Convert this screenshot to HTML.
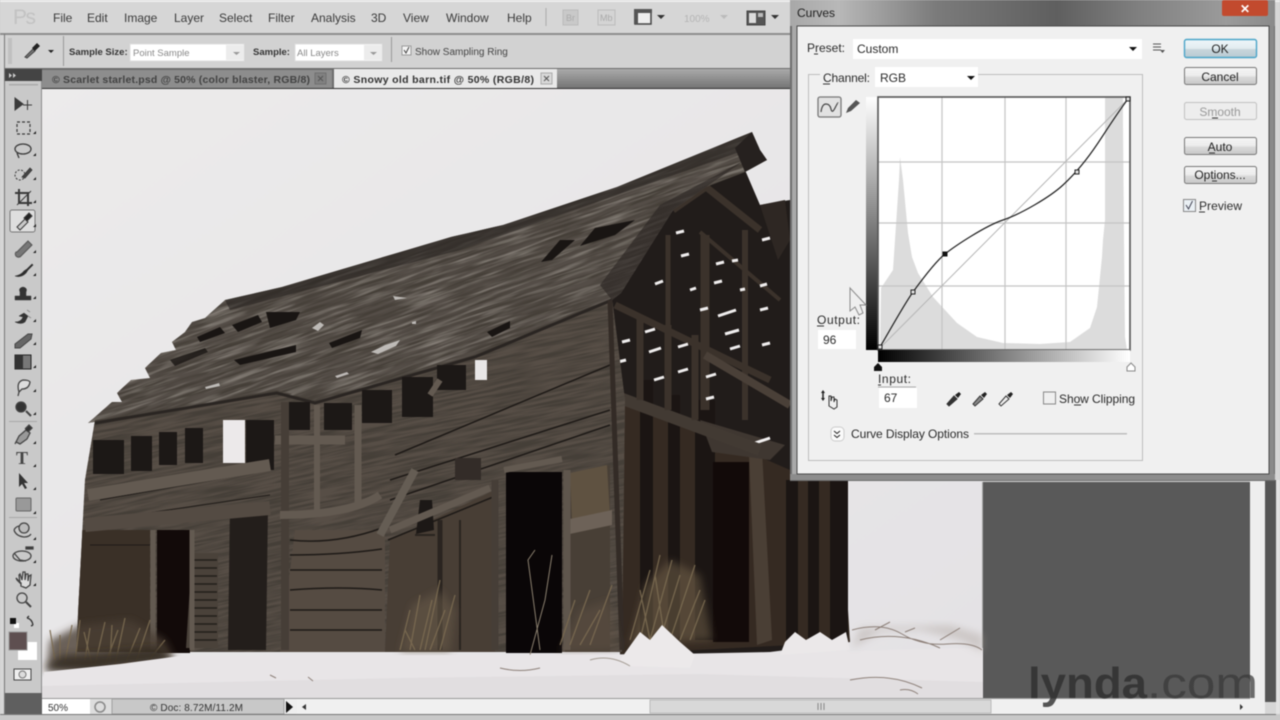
<!DOCTYPE html>
<html><head><meta charset="utf-8"><title>Curves</title>
<style>
html,body{margin:0;padding:0;background:#ccc;width:1280px;height:720px;overflow:hidden}
#w{position:relative;width:1280px;height:720px;overflow:hidden}
svg{display:block;position:absolute;left:0;top:0;filter:blur(.4px)}
text{font-family:"Liberation Sans",sans-serif;fill:#333;font-size:12px}
.m{font-size:12px;fill:#3a3a3a}
.o{font-size:9.5px;font-weight:bold;fill:#333}
.f{font-size:9.5px;fill:#888}
.d{font-size:12px;fill:#2a2a2a}
.b{font-size:12px;fill:#222;text-anchor:middle}
</style></head><body><div id="w">
<svg width="1280" height="720" viewBox="0 0 1280 720" xmlns="http://www.w3.org/2000/svg">
<defs>
<linearGradient id="btn" x1="0" y1="0" x2="0" y2="1"><stop offset="0" stop-color="#f5f5f5"/><stop offset=".5" stop-color="#ececec"/><stop offset=".55" stop-color="#dadada"/><stop offset="1" stop-color="#c8c8c8"/></linearGradient>
<linearGradient id="okb" x1="0" y1="0" x2="0" y2="1"><stop offset="0" stop-color="#eef6fa"/><stop offset=".5" stop-color="#e2ecf0"/><stop offset=".55" stop-color="#c9d6dc"/><stop offset="1" stop-color="#b9cad2"/></linearGradient>
<linearGradient id="vb" x1="0" y1="0" x2="0" y2="1"><stop offset="0" stop-color="#fff"/><stop offset="1" stop-color="#000"/></linearGradient>
<linearGradient id="hb" x1="0" y1="0" x2="1" y2="0"><stop offset="0" stop-color="#000"/><stop offset="1" stop-color="#fff"/></linearGradient>
<linearGradient id="title" x1="0" y1="0" x2="1" y2="0"><stop offset="0" stop-color="#a8a8a8"/><stop offset=".1" stop-color="#b8b8b8"/><stop offset=".3" stop-color="#7b7b7b"/><stop offset=".55" stop-color="#5f5f5f"/><stop offset=".72" stop-color="#808080"/><stop offset=".9" stop-color="#9b9b9b"/><stop offset="1" stop-color="#8a8a8a"/></linearGradient>
<linearGradient id="tabr" x1="0" y1="0" x2="0" y2="1"><stop offset="0" stop-color="#aaa"/><stop offset="1" stop-color="#757575"/></linearGradient>
<linearGradient id="sky" x1="0" y1="0" x2="1" y2="1"><stop offset="0" stop-color="#ecebeb"/><stop offset="1" stop-color="#e4e2e5"/></linearGradient>
<filter id="grain" x="0" y="0" width="100%" height="100%"><feTurbulence type="fractalNoise" baseFrequency=".02 .38" numOctaves="3" seed="4"/><feColorMatrix values="0 0 0 0 .06  0 0 0 0 .05  0 0 0 0 .04  3 0 0 0 -1.05"/></filter>
<filter id="grainL" x="0" y="0" width="100%" height="100%"><feTurbulence type="fractalNoise" baseFrequency=".02 .3" numOctaves="3" seed="11"/><feColorMatrix values="0 0 0 0 .7  0 0 0 0 .66  0 0 0 0 .6  2.4 0 0 0 -1.1"/></filter>
<filter id="soft" x="-20%" y="-20%" width="140%" height="140%"><feGaussianBlur stdDeviation="4"/></filter>
<clipPath id="roofc"><path d="M225 300 282 287 451 237 503 225 617 187 752 132 760 150 767 160 745 172 706 187 673 210 621 293 612 300 475 357 315 403 277 393 88 423 112 402 122 402 117 393 131 380 150 378 145 368 161 353 176 350 172 342 185 332 192 322 205 318Z"/></clipPath>
<clipPath id="wallc"><path d="M95 420 277 390 315 400 475 352 612 298 625 400 622 652 76 652 85 480Z"/></clipPath>
</defs>

<!-- app chrome -->
<rect width="1280" height="720" fill="#d6d6d6"/>
<rect x="0" y="0" width="1280" height="2" fill="#eee"/>
<rect x="0" y="33" width="800" height="2" fill="#8e8e8e"/>
<rect x="5" y="35" width="790" height="34" fill="#d2d2d2"/>
<rect x="4" y="34" width="1" height="686" fill="#777"/>
<text x="13" y="24" style="font-size:21px;fill:#c2c2c2" textLength="23">Ps</text>
<g>
<text class="m" x="53" y="22">File</text><text class="m" x="87" y="22">Edit</text><text class="m" x="124" y="22">Image</text><text class="m" x="174" y="22">Layer</text><text class="m" x="219" y="22">Select</text><text class="m" x="268" y="22">Filter</text><text class="m" x="311" y="22">Analysis</text><text class="m" x="371" y="22">3D</text><text class="m" x="403" y="22">View</text><text class="m" x="446" y="22">Window</text><text class="m" x="507" y="22">Help</text>
</g>
<rect x="545.5" y="8" width="1" height="18" fill="#aaa"/>
<rect x="563" y="10" width="15" height="15" fill="#c9c9c9" stroke="#bbb"/><text x="566" y="21" style="font-size:9px;fill:#aaa">Br</text>
<rect x="598" y="10" width="17" height="15" fill="#d4d4d4" stroke="#bbb"/><text x="600" y="21" style="font-size:9px;fill:#aaa">Mb</text>
<rect x="635" y="11" width="16" height="13" fill="#eee" stroke="#444" stroke-width="1.5"/><rect x="634" y="9" width="18" height="4" fill="#555"/><rect x="634" y="9" width="4" height="15" fill="#555"/>
<path d="M657 15h8l-4 4z" fill="#333"/>
<text x="684" y="22" style="font-size:10px;fill:#b5b5b5">100%</text><path d="M720 15h8l-4 4z" fill="#bbb"/>
<rect x="747" y="11" width="18" height="14" fill="#555" stroke="#444"/><rect x="749" y="13" width="7" height="10" fill="#ddd"/><rect x="758" y="13" width="5" height="4" fill="#bbb"/>
<path d="M771 15h8l-4 4z" fill="#333"/>

<!-- options bar -->
<rect x="8" y="38" width="4" height="26" fill="#bbb" opacity=".8"/>
<g transform="translate(24,42)"><path d="M1 15 9 7l2 2-8 7z" fill="#777" stroke="#444" stroke-width="1"/><path d="M8 6l5-5 3 3-5 5z" fill="#222"/></g>
<path d="M48 50h6l-3 3z" fill="#222"/>
<rect x="63" y="36" width="1" height="30" fill="#999"/>
<text class="o" x="69" y="55">Sample Size:</text>
<rect x="130" y="44" width="114" height="17" fill="#fff" stroke="#ddd"/><rect x="226" y="45" width="18" height="15" fill="#ececec"/>
<text class="f" x="133" y="56">Point Sample</text><path d="M233 52h7l-3.500 3z" fill="#999"/>
<text class="o" x="253" y="55">Sample:</text>
<rect x="295" y="44" width="87" height="17" fill="#fff" stroke="#ddd"/><rect x="364" y="45" width="18" height="15" fill="#ececec"/>
<text class="f" x="297" y="56">All Layers</text><path d="M370 52h7l-3.500 3z" fill="#999"/>
<rect x="391" y="37" width="1" height="25" fill="#999"/>
<rect x="402" y="46" width="9" height="9" fill="#f4f4f4" stroke="#999"/><path d="M404 50l2 3 3-6" fill="none" stroke="#444"/>
<text x="415" y="55" style="font-size:10px;fill:#444">Show Sampling Ring</text>

<!-- tab bar -->
<rect x="5" y="68" width="790" height="21" fill="#6d6d6d"/>
<rect x="557" y="69" width="240" height="19" fill="url(#tabr)"/>
<rect x="42" y="70" width="290" height="18" fill="#8d8d8d"/>
<text x="52" y="83" style="font-size:10.500px;font-weight:bold;fill:#424242" textLength="258">© Scarlet starlet.psd @ 50% (color blaster, RGB/8)</text>
<rect x="315" y="73" width="11" height="11" fill="#808080" stroke="#707070"/><path d="M318 76l5 5m0-5-5 5" stroke="#555"/>
<rect x="334" y="69" width="223" height="19" fill="#e9e9e9"/>
<text x="342" y="83" style="font-size:10.500px;font-weight:bold;fill:#333" textLength="192">© Snowy old barn.tif @ 50% (RGB/8)</text>
<rect x="541" y="73" width="11" height="11" fill="#d8d8d8" stroke="#aaa"/><path d="M544 76l5 5m0-5-5 5" stroke="#555"/>
<rect x="5" y="69" width="37" height="12" fill="#444"/>
<path d="M9 73l3 2.500-3 2.500zM13 73l3 2.500-3 2.500z" fill="#ccc"/>
<rect x="42" y="88" width="760" height="1" fill="#333"/>

<!-- canvas -->
<rect x="42" y="89" width="941" height="610" fill="url(#sky)"/>
<rect x="983" y="482" width="267" height="216" fill="#595959"/>
<rect x="1250" y="480" width="15" height="234" fill="#eee"/>
<rect x="1265" y="480" width="11" height="222" fill="#555"/>
<rect x="1276" y="480" width="4" height="240" fill="#e2e2e2"/>
<rect x="982" y="482" width="1" height="216" fill="#a8a8a8"/>

<!-- barn -->
<g>
<path d="M612 300 673 210 706 187 722 172 745 170 760 205 790 200 800 480 832 480 850 642 770 652 620 655 612 400Z" fill="#211c1a"/>
<path d="M618 395 790 470 840 480 850 642 620 654Z" fill="#352a22"/>
<g fill="#1b1513"><rect x="640" y="380" width="13" height="260"/><rect x="668" y="395" width="12" height="245"/><rect x="695" y="400" width="20" height="240"/><rect x="786" y="480" width="12" height="160"/><rect x="808" y="480" width="11" height="160"/><rect x="830" y="480" width="18" height="160"/></g>
<path d="M713 462h36v180h-36z" fill="#120a09"/>
<path d="M749 455 762 450 772 640 757 645Z" fill="#4a3f35"/>
<path d="M700 420 768 440 785 445 770 460 712 452Z" fill="#3f3731"/>
<path d="M704 428 752 444 770 438" stroke="#f2f0f0" stroke-width="3" fill="none"/>
<g stroke="#3b322b" fill="none">
<path d="M615 305 770 380" stroke-width="7"/>
<path d="M612 395 760 450" stroke-width="12" stroke="#423a33"/>
<path d="M668 235V400" stroke-width="5"/><path d="M705 235V410" stroke-width="9"/><path d="M745 230V420" stroke-width="6"/>
<path d="M640 315V400M668 325V410M695 335V420" stroke-width="7"/>
<path d="M673 210 706 187 760 230" stroke-width="7"/><path d="M700 232 780 300" stroke-width="4"/>
<path d="M705 355 790 405" stroke-width="8" stroke="#4a4038"/>
</g>
<g stroke="#efeded" stroke-width="3" fill="none">
<path d="M676 233l8-2M681 256l8-2M655 284l8-3M716 264l8-2M714 283l8-2M732 261l6-1M718 316l18-6M725 334l14-4M649 352l12-4M678 347l10-3M622 342l8-2M645 332l10-3M618 362l8-2M730 349l10-3M706 377l10-3M654 380l10-3M678 372l10-3M614 380l7-2M706 399l8-2M762 345l8-2M760 286l7-2M762 240l8-2M700 310l8-2M760 310l8-2M740 290l5-1M690 290l6-2"/>
</g>
<path d="M760 205 785 200 790 240 778 260Z" fill="#2e2723"/>
<!-- front wall -->
<path d="M95 420 277 390 315 400 475 352 612 298 625 400 622 652 76 652 85 480Z" fill="#574e46"/>
<!-- roof -->
<path d="M225 300 282 287 451 237 503 225 617 187 752 132 760 150 767 160 745 172 706 187 673 210 621 293 612 300 475 357 315 403 277 393 88 423 112 402 122 402 117 393 131 380 150 378 145 368 161 353 176 350 172 342 185 332 192 322 205 318Z" fill="#544d47"/>
<g clip-path="url(#roofc)">
<g transform="rotate(-19 400 300)"><rect x="-20" y="60" width="900" height="500" filter="url(#grain)"/><rect x="-20" y="60" width="900" height="500" filter="url(#grainL)" opacity=".4"/></g>
<path d="M225 300 451 237 752 132 745 150 460 250 230 310Z" fill="#2b2724" opacity=".65"/>
<path d="M706 187 673 210 621 293 612 300 600 285 660 205 745 160Z" fill="#2f2a27" opacity=".7"/>
<path d="M745 172 767 160 752 132 735 148Z" fill="#26211f"/>
</g>
<g fill="#191513">
<path d="M197 337 220 327 225 333 200 342ZM232 325 258 315 262 322 238 332ZM266 312 300 312 296 320 270 328Z"/>
<path d="M234 360 296 345 296 352 240 365Z"/>
<path d="M329 343 362 330 360 338 332 348Z"/>
<path d="M487 332 510 321 510 328 492 337Z"/>
<path d="M541 262 560 240 575 240 552 260ZM580 246 595 228 635 220 615 235Z"/>
<path d="M170 360 205 348 208 352 175 366Z" opacity=".8"/>
</g>
<g fill="#c9c6c3" opacity=".9">
<path d="M371 352 385 345 400 340 396 346 378 354Z"/><path d="M312 328l8-6 4 3-6 6z"/><path d="M335 376l12-4 2 2-12 4z"/><path d="M205 387l14-4 1 3-14 3z"/><path d="M412 322l4-1v3h-4z"/>
<path d="M393 296l14 2-12 2z"/>
</g>
<g clip-path="url(#wallc)">
<g transform="rotate(-12 350 480)"><rect x="0" y="260" width="720" height="460" filter="url(#grain)"/></g>
<path d="M78 530H150V652H78Z" fill="#3a3027"/>
<path d="M295 530H385V652H280Z" fill="#554b42" />
<path d="M390 540 495 490V652H385Z" fill="#483e35"/>
<path d="M565 475 610 465V652H565Z" fill="#483f36"/>
<path d="M570 473 607 465 610 515 572 522Z" fill="#5f5241"/>
<path d="M565 520 612 510 612 525 565 535Z" fill="#6d6258"/>
<g stroke="#1e1a17" stroke-width="1.500" fill="none">
<path d="M290 540q45 5 92-12M290 555q50 0 92-6M290 570h92M290 590q50-4 92 0M290 610h92M290 630h92M388 540l110-45M390 480 610 410M395 455l215-90M390 500l220-75"/>
<path d="M100 500 270 470M100 520 270 495M90 545h60" stroke-width="1"/>
</g>
<path d="M440 520V650" stroke="#2a2420" stroke-width="5"/>
<path d="M415 535h20M460 520v130" stroke="#2a2420" stroke-width="2"/>
</g>
<path d="M95 423 277 393 315 403 475 357 612 300" fill="none" stroke="#2a2522" stroke-width="3"/>
<!-- openings -->
<g fill="#1c1816">
<path d="M93 440h31v34H93ZM131 436h21v35h-21ZM159 432h18v33h-18ZM185 428h18v35h-18ZM246 420h28v50h-28Z"/>
<path d="M282 402h28v28h-28ZM324 403h28v27h-28ZM362 390h30v33h-30ZM402 377h31v40h-31ZM437 365h29v25h-29Z"/>
<path d="M157 530h33v123h-33Z" fill="#120a09"/>
<path d="M230 505h38l-2 145h-38Z" fill="#231e1b"/>
<path d="M506 472h56v181h-56Z" fill="#0a0607"/>
<path d="M420 500h12l2 30-18 4Z" /> <path d="M455 458h26v22h-26Z" fill="#332c28"/>
</g>
<path d="M223 420h22v43h-22Z" fill="#ece9ea"/>
<path d="M475 360h12v20h-12Z" fill="#e8e6e6"/>
<path d="M192 553h26v95h-32Z" fill="#4a423a"/>
<g stroke="#221e1b" stroke-width="1.500"><path d="M190 560h27M190 568h27M190 576h27M190 584h27M190 592h27M190 600h27M190 608h27M190 616h27M190 624h27M190 632h27M190 640h27"/></g>
<g stroke="#635a51" fill="none">
<path d="M88 495 270 465" stroke-width="12"/><path d="M85 525 270 508" stroke-width="14" stroke="#544b43"/>
<path d="M275 440h70" stroke-width="9"/><path d="M285 402V650" stroke-width="8" stroke="#463e37"/><path d="M317 405V510" stroke-width="6"/><path d="M358 405V505" stroke-width="7"/>
<path d="M415 470 380 535" stroke-width="8" stroke="#655d54"/><path d="M430 395 440 380" stroke-width="6"/>
<path d="M280 515q70 0 100-20" stroke-width="8"/><path d="M390 530 490 488" stroke-width="7"/>
<path d="M495 480V650" stroke-width="7" stroke="#463e37"/><path d="M504 470l58-11" stroke-width="6"/><path d="M567 470V650" stroke-width="7" stroke="#5f564d"/><path d="M610 300 622 650" stroke-width="5" stroke="#332b26"/>
<path d="M153 530V650" stroke-width="5"/><path d="M192 530V650" stroke-width="5"/>
</g>
<!-- grass patches (soft edges) -->
<g filter="url(#soft)">
<path d="M46 670 50 640 80 625 130 620 165 640 175 660 100 672Z" fill="#4a4034" opacity=".8"/>
<path d="M400 652 412 605 440 590 455 610 450 652Z" fill="#6b5d49" opacity=".5"/>
<path d="M630 645 645 585 670 560 700 575 712 640Z" fill="#6e5e48" opacity=".55"/>
<path d="M560 652 580 610 610 600 620 650Z" fill="#6b5d49" opacity=".35"/>
</g>
<g stroke="#7a6a51" stroke-width="1.300" fill="none" opacity=".9">
<path d="M55 660 50 630M65 662 72 625M75 662 80 620M85 660 90 628M95 665 105 622M105 665 118 630M115 665 125 618M125 665 140 628M135 665 150 620M145 665 165 640M60 660 60 635M92 665 84 632M110 662 112 625"/>
<path d="M400 650 410 610M410 650 420 595M420 650 432 600M430 650 445 610M440 650 455 595M415 650 405 630M425 650 440 580"/>
<path d="M630 640 650 570M640 640 660 555M650 640 672 560M660 640 680 575M670 640 695 565M680 640 700 590M690 640 705 600M650 640 640 590M665 640 655 575"/>
<path d="M560 645 575 600M570 645 590 590M580 645 600 610M590 645 612 585"/>
</g>
<path d="M44 670 60 656 100 653 160 647 172 662 120 667 90 672Z" fill="#2f271f" opacity=".8" filter="url(#soft)"/>
<path d="M540 650 528 560 535 550M530 655 545 600 552 555" stroke="#8a7f6e" stroke-width="1" fill="none"/>
<!-- snow -->
<path d="M44 672 120 664 180 656 700 654 983 648V699H42Z" fill="#e8e5e7"/>
<path d="M42 699H983V682L700 674 400 678 42 686Z" fill="#e1dee0"/>
<path d="M620 660 640 632 650 640 662 625 680 642 695 655 690 668 630 666Z" fill="#ece9ea"/>
<path d="M785 642 795 632 806 640 820 632 832 640 846 632 850 650 780 655Z" fill="#ebe8e9"/>
<path d="M590 660q20-6 40 6" stroke="#a39b92" fill="none"/>
<path d="M852 648 880 632 920 630 960 640 983 652V635L950 625 860 628Z" fill="#a99f97" opacity=".4" filter="url(#soft)"/>
<g stroke="#8d8079" stroke-width="1" fill="none">
<path d="M852 630q30-8 50 4t45 10 35 6M860 640q40-10 80 8M875 630 890 622M940 640 960 628M905 632 915 628"/>
<path d="M850 680q40-8 72 8M900 690q10-2 18 4"/><path d="M270 675l6 3M308 677l5 4"/><path d="M500 668q20 5 40 0"/>
</g>
</g>

<!-- toolbar -->
<rect x="5" y="81" width="37" height="612" fill="#c9c9c9"/>
<rect x="5" y="693" width="37" height="21" fill="#5f5f5f"/>
<rect x="41" y="81" width="1" height="612" fill="#8a8a8a"/>
<rect x="9" y="84" width="29" height="1.500" fill="#aaa"/>
<rect x="10" y="210" width="25" height="22" rx="2" fill="#dedede" stroke="#777" stroke-width="1"/>
<g stroke="#a9a9a9"><path d="M9 421.500h28M9 517.500h28"/></g>
<g fill="#3a3a3a" stroke="#3a3a3a">
<path d="M15 98l8 6-8 6z"/><path d="M23 105h9M27.500 100v10" stroke-width="1" fill="none"/>
<rect x="17" y="122" width="13" height="12" fill="none" stroke-dasharray="3 2" stroke-width="1.200"/>
<ellipse cx="23" cy="149" rx="8" ry="5" fill="none" stroke-width="1.300"/><path d="M17 153l2 5" fill="none" stroke-width="1.300"/>
<circle cx="20" cy="175" r="5" fill="none" stroke-dasharray="2 1.500"/><path d="M22 177l8-9 2 2-7 8z" stroke-width=".8" fill="#444"/>
<path d="M19 189V203H32M15 193H28V206" fill="none" stroke-width="2"/><path d="M17 205 31 191" fill="none"/>
<path d="M17 227l8-8 3 3-8 8z" fill="#c9c9c9" stroke-width="1"/><path d="M24 218l5-5 3 3-5 5z" fill="#222"/>
<path d="M17 252l11-11 4 4-11 11a3 3 0 0 1-5-4z" fill="#777" stroke="#555"/>
<path d="M15 276q6-1 9-5l3-2 5-5 1 1-5 5-2 3q-5 5-11 3z" fill="#2a2a2a" stroke-width=".6"/>
<path d="M15 300h16v-4h-5v-4q2-4-3-5-5 1-3 5v4h-5z" fill="#333" stroke-width=".5"/>
<path d="M15 322q6 0 8-5l-4-1 5-3 4 3-3 6q-4 3-10 0z" fill="#333" stroke-width=".5"/><path d="M27 310l3 2M28 316l3 2" fill="none" stroke="#888"/>
<path d="M15 344l13-10h4l-1 5-11 9h-5z" fill="#666" stroke="#444"/>
</g>
<rect x="15" y="355" width="16" height="14" fill="#777" stroke="#222"/><rect x="15" y="355" width="8" height="14" fill="#333"/>
<g stroke="#444" fill="none" stroke-width="1.300">
<path d="M19 392q-3-10 4-12 6 0 7 2-1 7-8 7z" fill="#ddd"/><path d="M19 392l-1 4"/>
<circle cx="21" cy="407" r="5" fill="#333"/><path d="M26 411l5 5" stroke-width="2"/>
<path d="M16 442l3-6 7-6 4 3-3 6-7 5z" fill="#999"/><path d="M25 429l4-4 3 3-4 4" fill="#333"/><path d="M16 442l-1 2"/>
</g>
<text x="16" y="464" style="font-size:18px;font-family:'Liberation Serif',serif;font-weight:bold;fill:#444">T</text>
<path d="M19 473v14l3-3 3 5 2-1-3-5h4z" fill="#333"/>
<rect x="16" y="498" width="15" height="13" rx="1" fill="#999" stroke="#666"/>
<g stroke="#444" fill="none" stroke-width="1.300">
<circle cx="24" cy="528" r="5" fill="#bbb"/><path d="M14 530q2-4 6-4M14 530q2 6 10 7 5 0 7-3"/>
<ellipse cx="22" cy="556" rx="9" ry="5"/><path d="M14 553l6 7 6 1"/><rect x="26" y="547" width="7" height="2" fill="#333"/>
<path d="M16 578l5 5v3l5 2 4-3 1-10-2 1-1 5v-7l-2 0-1 6v-8h-2l-1 8-2-6-1 1 1 8-3-3z" fill="#ddd"/>
<circle cx="22" cy="598" r="5"/><path d="M26 602l5 5" stroke-width="2"/>
</g>
<rect x="14" y="623" width="5" height="5" fill="#fff"/><rect x="10" y="618" width="6" height="6" fill="#111"/>
<path d="M27 618q5 1 6 7M27 618l2-2M33 625l-2 1" stroke="#333" fill="none" stroke-width="1.300"/>
<rect x="18" y="642" width="19" height="18" fill="#fff"/>
<rect x="9" y="632" width="18" height="18" fill="#5e4f50" stroke="#999"/>
<rect x="14" y="669" width="17" height="11" fill="#eee" stroke="#444"/><circle cx="22.500" cy="674.500" r="3.500" fill="#ddd" stroke="#777"/>
<g fill="#222"><path d="M33 134l3-3v3zM33 156l3-3v3zM33 180l3-3v3zM33 203l3-3v3zM33 227l3-3v3zM33 253l3-3v3zM33 276l3-3v3zM33 299l3-3v3zM33 322l3-3v3zM33 345l3-3v3zM33 368l3-3v3zM33 392l3-3v3zM33 415l3-3v3zM33 444l3-3v3zM33 467l3-3v3zM33 490l3-3v3zM33 514l3-3v3zM33 540l3-3v3zM33 563l3-3v3zM33 586l3-3v3z"/></g>

<!-- status bar -->
<rect x="42" y="698" width="1208" height="16" fill="#eee"/>
<rect x="42" y="698" width="1208" height="1" fill="#999"/>
<rect x="42" y="699" width="48" height="15" fill="#fff"/>
<text x="48" y="711" style="font-size:10px;fill:#333">50%</text>
<rect x="90" y="699" width="22" height="15" fill="#ddd"/><circle cx="100" cy="707" r="5" fill="none" stroke="#888" stroke-width="1.500"/>
<rect x="112" y="699" width="172" height="15" fill="#c8c8c8" stroke="#a0a0a0"/>
<text x="150" y="711" style="font-size:10px;fill:#333" textLength="93">© Doc: 8.72M/11.2M</text>
<path d="M286 701l7 6-7 6z" fill="#111"/>
<rect x="297" y="699" width="953" height="15" fill="#f0f0f0"/>
<path d="M306 704v6l-4-3z" fill="#333"/>
<rect x="650" y="700" width="341" height="13" fill="#d8d8d8" stroke="#bbb"/>
<path d="M818 703v7M821 703v7M824 703v7" stroke="#888"/>
<path d="M1240 704v6l3-3z" fill="#333"/>
<rect x="0" y="714" width="1280" height="6" fill="#c8c8c8"/>
<rect x="0" y="714" width="1276" height="1" fill="#777"/>

<!-- lynda -->
<text x="1028" y="698" style="font-size:44px;font-weight:bold;fill:#2e2e2e;opacity:.8" textLength="119" lengthAdjust="spacingAndGlyphs">lynda</text>
<text x="1147" y="698" style="font-size:44px;fill:#383838;opacity:.72" textLength="111" lengthAdjust="spacingAndGlyphs">.com</text>

<!-- dialog -->
<rect x="790" y="0" width="485" height="481" fill="#6d6d6d"/>
<rect x="790" y="0" width="485" height="26" fill="url(#title)"/>
<rect x="790" y="474" width="485" height="6" fill="#8c8c8c"/>
<rect x="792" y="26" width="5" height="448" fill="#a9a9a9"/>
<rect x="1269" y="26" width="5" height="448" fill="#8a8a8a"/>
<text x="797" y="17" style="font-size:12px;fill:#222">Curves</text>
<rect x="1222" y="0" width="46" height="16" rx="2" fill="#c24a2e"/>
<text x="1245" y="13" style="font-size:12px;font-weight:bold;fill:#fff;text-anchor:middle">✕</text>
<rect x="797" y="26" width="472" height="448" fill="#f0f0f0" stroke="#4a4a4a"/>

<text class="d" x="807" y="52" textLength="38">Preset:</text>
<rect x="853" y="39" width="289" height="20" fill="#fff"/>
<text class="d" x="857" y="53">Custom</text>
<path d="M1129 47h8l-4 4z" fill="#111"/>
<path d="M1153 44h8M1153 47h8M1153 50h8" stroke="#555"/><path d="M1160 50h5l-2.500 3z" fill="#555"/>

<rect x="808.500" y="74.500" width="334" height="386" fill="none" stroke="#bdbdbd"/>
<rect x="820" y="68" width="158" height="18" fill="#f0f0f0"/>
<text class="d" x="823" y="82" textLength="47">Channel:</text>
<rect x="875" y="67" width="103" height="20" fill="#fff"/>
<text class="d" x="880" y="82">RGB</text>
<path d="M967 76h8l-4 4z" fill="#111"/>

<rect x="818" y="97" width="23" height="20" rx="2" fill="#e2e2e2" stroke="#777" stroke-width="1.300"/>
<path d="M821 112q1-8 5-8t5 5 4-1 3-5" fill="none" stroke="#444" stroke-width="1.200"/>
<path d="M846 113l2-5 8-8 4 3-9 8z" fill="#555"/>

<!-- curve graph -->
<rect x="866" y="97" width="12" height="253" fill="url(#vb)"/>
<rect x="878" y="97" width="252" height="253" fill="#fff"/>
<path d="M880 350 881 288 893 270 895 240 899 180 900 157 903 180 908 233 912 257 918 273 933 297 957 323 977 337 1003 343 1040 344 1070 342 1090 328 1097 307 1102 257 1103 240 1105 220 1105 97 1123 97 1123 123 1124 240 1125 337 1127 350Z" fill="#dcdcdc"/>
<g stroke="#c4c4c4" stroke-width="1.200"><path d="M942 97V350M1005 97V350M1066 97V350M878 162H1130M878 223H1130M878 286H1130"/></g>
<path d="M880 348 1128 99" stroke="#b5b5b5"/>
<path d="M880 347C890 330 905 303 913 292S935 262 945 254 985 226 1003 220 1050 197 1063 185 1088 158 1098 143 1118 112 1128 99" fill="none" stroke="#222" stroke-width="1.200"/>
<rect x="878" y="97" width="252" height="253" fill="none" stroke="#555" stroke-width="1.600"/>
<rect x="942.500" y="251.500" width="5" height="5" fill="#111"/>
<g fill="#ddd" stroke="#222"><rect x="911" y="290" width="4" height="4"/><rect x="1075" y="170" width="4" height="4"/><rect x="1126" y="97" width="4" height="4"/><rect x="878" y="345" width="4" height="4"/></g>
<rect x="878" y="350" width="252" height="12" fill="url(#hb)"/>
<path d="M878 363l4 4v4h-8v-4z" fill="#111"/><path d="M1131 363l4 4v4h-8v-4z" fill="#fff" stroke="#888"/>

<path d="M850 288v23l5-4 4 8 4-2-3-8h6z" fill="#eee" fill-opacity=".35" stroke="#8a8a8a" stroke-width="1"/>

<text class="d" x="817" y="324" textLength="43">Output:</text>
<rect x="818" y="330" width="38" height="19" fill="#fff"/>
<text class="d" x="823" y="344">96</text>
<text class="d" x="878" y="383" textLength="33">Input:</text>
<rect x="878" y="386.500" width="38" height="1" fill="#aaa"/>
<rect x="879" y="388" width="38" height="20" fill="#fff"/>
<text class="d" x="884" y="402">67</text>
<path d="M829 396v10l5 3 3-2v-7l-2-1-1 3v-5h-2l-1 4v-5z" fill="#f0f0f0" stroke="#333"/><path d="M823 391v9" stroke="#222" stroke-width="1.500"/><path d="M821 393l2-3 2 3zM821 398l2 3 2-3z" fill="#222"/>
<g><path d="M947 404l7-8 3 3-8 7z" fill="#333" stroke="#333"/><path d="M955 395l4-3 2 2-3 4z" fill="#222"/>
<path d="M973 404l7-8 3 3-8 7z" fill="#888" stroke="#333"/><path d="M981 395l4-3 2 2-3 4z" fill="#222"/>
<path d="M999 404l7-8 3 3-8 7z" fill="#eee" stroke="#333"/><path d="M1007 395l4-3 2 2-3 4z" fill="#222"/></g>
<rect x="1043.500" y="392" width="12" height="12" fill="#efefef" stroke="#888"/>
<text class="d" x="1059" y="403" textLength="76">Show Clipping</text>
<rect x="831" y="427" width="13" height="14" rx="4" fill="#fafafa" stroke="#ccc"/>
<path d="M834 431l3 2.500 3-2.500M834 435l3 2.500 3-2.500" fill="none" stroke="#222"/>
<text class="d" x="851" y="438" textLength="118">Curve Display Options</text>
<rect x="974" y="433" width="153" height="1.500" fill="#bdbdbd"/>

<!-- buttons -->
<rect x="1184.500" y="39.500" width="72" height="18" rx="2" fill="url(#okb)" stroke="#4aa4c8" stroke-width="1.400"/><text class="b" x="1220" y="53">OK</text>
<rect x="1184.500" y="67.500" width="72" height="17" rx="2" fill="url(#btn)" stroke="#777"/><text class="b" x="1220" y="81">Cancel</text>
<rect x="1184.500" y="102.500" width="72" height="17" rx="2" fill="#ededed" stroke="#c0c0c0"/><text class="b" x="1220" y="116" style="fill:#999">Smooth</text>
<rect x="1184.500" y="137.500" width="72" height="17" rx="2" fill="url(#btn)" stroke="#777"/><text class="b" x="1220" y="151">Auto</text>
<rect x="1184.500" y="166.500" width="72" height="17" rx="2" fill="url(#btn)" stroke="#777"/><text class="b" x="1220" y="179">Options...</text>
<rect x="1183.500" y="199.500" width="12" height="12" fill="#eaf0f4" stroke="#888"/><path d="M1186 205l2.500 4 4-8" fill="none" stroke="#445"/>
<text class="d" x="1199" y="210" textLength="43">Preview</text>
<!-- mnemonics -->
<g stroke="#333" stroke-width="1"><path d="M814 54h4M823 84h7M817 326h7M878 385h3M1074 405h7M1199 212h6M1212 118h6M1209 153h6M1212 181h5"/></g>
</svg>
</div></body></html>
